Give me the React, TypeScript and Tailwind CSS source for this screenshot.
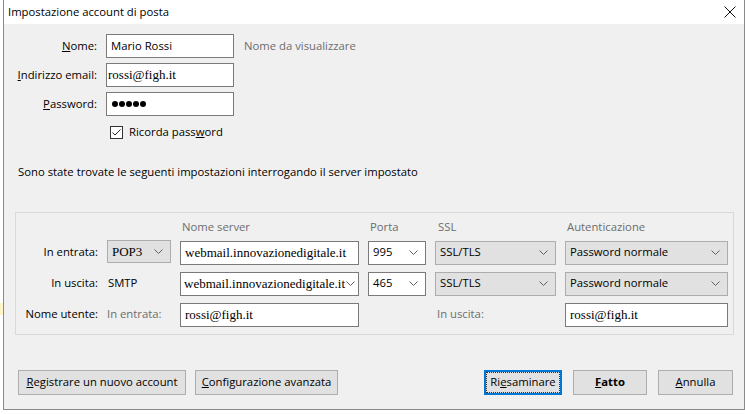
import React from "react";

const ui = "font-['Segoe_UI','Open_Sans','Noto_Sans',sans-serif]";
const serif = "font-['Liberation_Serif','Times_New_Roman',serif]";

function Chevron({ className = "" }: { className?: string }) {
  return (
    <svg width="9" height="5" viewBox="0 0 9 5" className={className}>
      <path d="M0.5 0.5 L4.5 4.5 L8.5 0.5" fill="none" stroke="#606060" strokeWidth="1" />
    </svg>
  );
}

function Select({ value, gray = false, serifText = false, className = "" }: { value: string; gray?: boolean; serifText?: boolean; className?: string }) {
  return (
    <div
      className={`flex h-[24px] items-center justify-between border pl-[4px] pr-[7px] text-[11.3px] text-black ${
        gray ? "border-[#adadad] bg-[#e1e1e1]" : "border-[#7a7a7a] bg-white"
      } ${className}`}
    >
      <span className={serifText ? `${serif} text-[13px]` : ""}>{value}</span>
      <Chevron />
    </div>
  );
}

function Input({ value, serifText = false, className = "" }: { value: string; serifText?: boolean; className?: string }) {
  return (
    <div className={`flex h-[24px] items-center border border-[#7a7a7a] bg-white pl-[4px] text-black ${serifText ? `${serif} text-[13px]` : "text-[11.3px]"} ${className}`}>
      {value}
    </div>
  );
}

function Btn({ children, bold = false, focused = false, className = "" }: { children: React.ReactNode; bold?: boolean; focused?: boolean; className?: string }) {
  return (
    <div
      className={`flex h-[25px] items-center justify-center text-[11.3px] ${bold ? "font-bold" : ""} ${
        focused ? "border-2 border-[#0078d7] bg-[#e1e1e1]" : "border border-[#adadad] bg-[#e1e1e1]"
      } ${className}`}
    >
      {focused ? (
        <span className="flex h-full w-full items-center justify-center border border-dotted border-[#333]">{children}</span>
      ) : (
        children
      )}
    </div>
  );
}

export default function App() {
  return (
    <div className={`flex h-[414px] w-[745px] overflow-hidden bg-white ${ui} text-[11.3px] text-black`}>
      {/* strip of the window behind */}
      <div className="flex w-[3px] flex-col bg-white">
        <div className="h-[303px]" />
        <div className="h-[12px] bg-[#fff6c8]" />
      </div>

      <div className="flex h-[410px] w-[742px] flex-col border-x border-b border-[#8a8a8a]">
        {/* title bar */}
        <div className="flex h-[24px] items-center justify-between bg-white pl-[4px] pr-[8px]">
          <span className="leading-none">Impostazione account di posta</span>
          <svg width="12" height="12" viewBox="0 0 12 12">
            <path d="M0.5 0.5 L11.5 11.5 M11.5 0.5 L0.5 11.5" stroke="#111" strokeWidth="1" />
          </svg>
        </div>

        <div className="flex flex-1 flex-col bg-[#f0f0f0]">
          {/* account fields */}
          <div className="flex flex-col gap-[5px] pt-[10px]">
            <div className="flex items-center">
              <span className="w-[93px] text-right"><u>N</u>ome:</span>
              <Input value="Mario Rossi" className="ml-[9px] w-[128px]" />
              <span className="ml-[10px] text-[#6d6d6d]">Nome da visualizzare</span>
            </div>
            <div className="flex items-center">
              <span className="w-[93px] text-right"><u>I</u>ndirizzo email:</span>
              <Input value="rossi@figh.it" serifText className="ml-[9px] w-[128px] !pl-[1px]" />
            </div>
            <div className="flex items-center">
              <span className="w-[93px] text-right"><u>P</u>assword:</span>
              <div className="ml-[9px] flex h-[24px] w-[128px] items-center gap-[1px] border border-[#7a7a7a] bg-white pl-[5px]">
                {[0, 1, 2, 3, 4].map((i) => (
                  <span key={i} className="h-[6px] w-[6px] rounded-full bg-black" />
                ))}
              </div>
            </div>
            <div className="mt-[3px] flex items-center pl-[106px]">
              <div className="flex h-[13px] w-[13px] items-center justify-center border border-[#333] bg-white">
                <svg width="11" height="11" viewBox="0 0 11 11">
                  <path d="M1.5 5.5 L4 8 L9.5 2.5" fill="none" stroke="#222" strokeWidth="1" />
                </svg>
              </div>
              <span className="ml-[6px]">Ricorda pass<u>w</u>ord</span>
            </div>
          </div>

          <div className="mt-[23px] pl-[14px]">
            Sono state trovate le seguenti impostazioni interrogando il server impostato
          </div>

          {/* server settings group */}
          <div className="ml-[11px] mt-[31px] h-[123px] w-[719px] border border-[#d9d9d9] pt-[9px]">
            <div className="grid grid-cols-[82px_64px_179px_58px_121px_163px] grid-rows-[12px_24px_24px_24px] items-center gap-x-[9px] gap-y-[7px]">
              <div />
              <div />
              <span className="pl-[2px] text-[#6d6d6d]">Nome server</span>
              <span className="pl-[2px] text-[#6d6d6d]">Porta</span>
              <span className="pl-[3px] text-[#6d6d6d]">SSL</span>
              <span className="pl-[2px] text-[#6d6d6d]">Autenticazione</span>

              <span className="text-right">In entrata:</span>
              <Select value="POP3" gray serifText className="!h-[23px] -translate-y-[1px]" />
              <Input value="webmail.innovazionedigitale.it" serifText />
              <Select value="995" />
              <Select value="SSL/TLS" gray />
              <Select value="Password normale" gray />

              <span className="text-right">In uscita:</span>
              <span className="pl-[1px]">SMTP</span>
              <div className="flex h-[24px] items-center justify-between border border-[#7a7a7a] bg-white pl-[3px] pr-[3px]">
                <span className={`${serif} text-[13px]`}>webmail.innovazionedigitale.it</span>
                <Chevron />
              </div>
              <Select value="465" />
              <Select value="SSL/TLS" gray />
              <Select value="Password normale" gray />

              <span className="text-right">Nome utente:</span>
              <span className="text-[#6d6d6d]">In entrata:</span>
              <Input value="rossi@figh.it" serifText />
              <div />
              <span className="pl-[2px] text-[#6d6d6d]">In uscita:</span>
              <Input value="rossi@figh.it" serifText />
            </div>
          </div>

          {/* buttons */}
          <div className="mt-[35px] flex items-center pl-[14px] pr-[11px]">
            <Btn className="w-[168px]"><span><u>R</u>egistrare un nuovo account</span></Btn>
            <Btn className="ml-[9px] w-[143px]"><span><u>C</u>onfigurazione avanzata</span></Btn>
            <Btn focused className="ml-auto w-[78px]"><span>Ri<u>e</u>saminare</span></Btn>
            <Btn bold className="ml-[11px] w-[74px]"><span><u>F</u>atto</span></Btn>
            <Btn className="ml-[11px] w-[75px]"><span><u>A</u>nnulla</span></Btn>
          </div>
        </div>
      </div>
    </div>
  );
}
